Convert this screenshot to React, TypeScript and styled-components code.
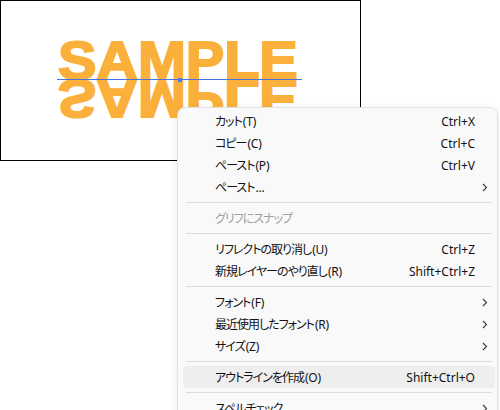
import styled, { createGlobalStyle } from "styled-components";

const GlobalStyle = createGlobalStyle`
  html, body {
    margin: 0;
    padding: 0;
    background: #ffffff;
    overflow: hidden;
  }
  body {
    width: 500px;
    height: 410px;
    font-family: "Noto Sans", "Noto Sans CJK JP", sans-serif;
  }
`;

const Stage = styled.div`
  position: relative;
  width: 500px;
  height: 410px;
  overflow: hidden;
`;

/* アートボード */
const Artboard = styled.div`
  border: 1px solid #000;
  background: #fff;
  padding: 32px 0 0 56px;
  width: 303px;
  height: 127px;
`;

const TextObject = styled.div`
  position: relative;
  width: 250px;
  height: 90px;
  padding: 0.5px 0 0 1px;
`;

const SampleText = styled.div`
  font-family: "Liberation Sans", Arial, sans-serif;
  font-weight: 700;
  font-size: 53.5px;
  line-height: 53.5px;
  color: #fbb03b;
  -webkit-text-stroke: 2px #fbb03b;
  white-space: nowrap;
  transform-origin: 0 45.3px;
  transform: scaleX(1.075);
`;

const Reflection = styled(SampleText)`
  position: absolute;
  left: 1px;
  top: 0.5px;
  transform: scale(1.075, -1);
`;

const Baseline = styled.div`
  position: absolute;
  left: 0;
  top: 46px;
  width: 245px;
  height: 1px;
  background: #4a72e0;
`;

const Anchor = styled.div`
  position: absolute;
  left: 121px;
  top: 45px;
  width: 4px;
  height: 4px;
  background: #4a7cf0;
`;

/* コンテキストメニュー */
const Menu = styled.div`
  position: absolute;
  left: 177px;
  top: 107px;
  width: 319px;
  padding: 2px 0 8px;
  background: #f9f9f9;
  border: 1px solid #e2e2e2;
  border-radius: 8px;
  box-shadow: 0 3px 10px rgba(0, 0, 0, 0.1);
  display: flex;
  flex-direction: column;
`;

const Item = styled.div<{ $active?: boolean; $disabled?: boolean }>`
  display: flex;
  align-items: center;
  height: 22px;
  margin: 0 2px 0 5px;
  padding-left: 32px;
  border-radius: 4px;
  font-size: 12px;
  color: ${(p) => (p.$disabled ? "#a0a0a0" : "#111111")};
  background: ${(p) => (p.$active ? "#eeeeee" : "transparent")};
`;

const Label = styled.span`
  flex: 1;
  white-space: nowrap;
`;

const Jp = styled.span`
  letter-spacing: -1px;
  font-feature-settings: "palt";
`;

const Key = styled.span`
  margin-left: 1px;
  letter-spacing: -0.2px;
`;

const Shortcut = styled.span`
  white-space: nowrap;
`;

const ArrowSlot = styled.span`
  width: 20px;
  display: flex;
  justify-content: center;
  align-items: center;
`;

const Separator = styled.div`
  height: 1px;
  margin: 4px 5px 4px 8px;
  background: #dcdcdc;
`;

type Entry =
  | { sep: true }
  | {
      label: string;
      key?: string;
      shortcut?: string;
      sub?: boolean;
      disabled?: boolean;
      active?: boolean;
    };

const entries: Entry[] = [
  { label: "カット", key: "(T)", shortcut: "Ctrl+X" },
  { label: "コピー", key: "(C)", shortcut: "Ctrl+C" },
  { label: "ペースト", key: "(P)", shortcut: "Ctrl+V" },
  { label: "ペースト", key: "...", sub: true },
  { sep: true },
  { label: "グリフにスナップ", disabled: true },
  { sep: true },
  { label: "リフレクトの取り消し", key: "(U)", shortcut: "Ctrl+Z" },
  { label: "新規レイヤーのやり直し", key: "(R)", shortcut: "Shift+Ctrl+Z" },
  { sep: true },
  { label: "フォント", key: "(F)", sub: true },
  { label: "最近使用したフォント", key: "(R)", sub: true },
  { label: "サイズ", key: "(Z)", sub: true },
  { sep: true },
  { label: "アウトラインを作成", key: "(O)", shortcut: "Shift+Ctrl+O", active: true },
  { sep: true },
  { label: "スペルチェック", sub: true },
];

function Chevron() {
  return (
    <svg width="6" height="9" viewBox="0 0 6 9">
      <polyline points="1,1 4.5,4.5 1,8" fill="none" stroke="#3a3a3a" strokeWidth="1.1" />
    </svg>
  );
}

export default function App() {
  return (
    <Stage>
      <GlobalStyle />
      <Artboard>
        <TextObject>
          <SampleText>SAMPLE</SampleText>
          <Reflection>SAMPLE</Reflection>
          <Baseline />
          <Anchor />
        </TextObject>
      </Artboard>

      <Menu>
        {entries.map((e, i) =>
          "sep" in e ? (
            <Separator key={i} />
          ) : (
            <Item key={i} $active={e.active} $disabled={e.disabled}>
              <Label>
                <Jp>{e.label}</Jp>
                {e.key && <Key>{e.key}</Key>}
              </Label>
              {e.shortcut && <Shortcut>{e.shortcut}</Shortcut>}
              <ArrowSlot>{e.sub && <Chevron />}</ArrowSlot>
            </Item>
          )
        )}
      </Menu>
    </Stage>
  );
}
